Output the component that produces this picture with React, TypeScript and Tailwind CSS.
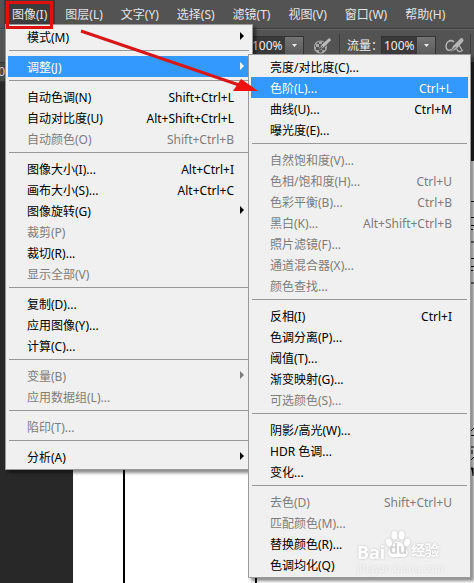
import clsx from "clsx";

type Item = {
  label: string;
  keys?: string;
  disabled?: boolean;
  active?: boolean;
  sub?: boolean;
};

const MENU_BAR = [
  "图像(I)",
  "图层(L)",
  "文字(Y)",
  "选择(S)",
  "滤镜(T)",
  "视图(V)",
  "窗口(W)",
  "帮助(H)",
];

const IMAGE_MENU: Item[][] = [
  [{ label: "模式(M)", sub: true }],
  [{ label: "调整(J)", sub: true, active: true }],
  [
    { label: "自动色调(N)", keys: "Shift+Ctrl+L" },
    { label: "自动对比度(U)", keys: "Alt+Shift+Ctrl+L" },
    { label: "自动颜色(O)", keys: "Shift+Ctrl+B", disabled: true },
  ],
  [
    { label: "图像大小(I)...", keys: "Alt+Ctrl+I" },
    { label: "画布大小(S)...", keys: "Alt+Ctrl+C" },
    { label: "图像旋转(G)", sub: true },
    { label: "裁剪(P)", disabled: true },
    { label: "裁切(R)..." },
    { label: "显示全部(V)", disabled: true },
  ],
  [
    { label: "复制(D)..." },
    { label: "应用图像(Y)..." },
    { label: "计算(C)..." },
  ],
  [
    { label: "变量(B)", sub: true, disabled: true },
    { label: "应用数据组(L)...", disabled: true },
  ],
  [{ label: "陷印(T)...", disabled: true }],
  [{ label: "分析(A)", sub: true }],
];

const ADJUST_MENU: Item[][] = [
  [
    { label: "亮度/对比度(C)..." },
    { label: "色阶(L)...", keys: "Ctrl+L", active: true },
    { label: "曲线(U)...", keys: "Ctrl+M" },
    { label: "曝光度(E)..." },
  ],
  [
    { label: "自然饱和度(V)...", disabled: true },
    { label: "色相/饱和度(H)...", keys: "Ctrl+U", disabled: true },
    { label: "色彩平衡(B)...", keys: "Ctrl+B", disabled: true },
    { label: "黑白(K)...", keys: "Alt+Shift+Ctrl+B", disabled: true },
    { label: "照片滤镜(F)...", disabled: true },
    { label: "通道混合器(X)...", disabled: true },
    { label: "颜色查找...", disabled: true },
  ],
  [
    { label: "反相(I)", keys: "Ctrl+I" },
    { label: "色调分离(P)..." },
    { label: "阈值(T)..." },
    { label: "渐变映射(G)..." },
    { label: "可选颜色(S)...", disabled: true },
  ],
  [
    { label: "阴影/高光(W)..." },
    { label: "HDR 色调..." },
    { label: "变化..." },
  ],
  [
    { label: "去色(D)", keys: "Shift+Ctrl+U", disabled: true },
    { label: "匹配颜色(M)...", disabled: true },
    { label: "替换颜色(R)..." },
    { label: "色调均化(Q)" },
  ],
];

function MenuRow({ item }: { item: Item }) {
  return (
    <button
      type="button"
      role="menuitem"
      disabled={item.disabled}
      className={clsx(
        "relative flex h-[21px] w-full items-center justify-between pl-[19px] pr-4 pt-0.5 text-left whitespace-nowrap",
        item.active && "bg-[#3399ff] text-white",
        item.disabled && "text-[#7d7d7d]"
      )}
    >
      <span>{item.label}</span>
      {item.keys && <span>{item.keys}</span>}
      {item.sub && (
        <svg className="absolute right-1.5 top-1.5 h-2 w-1" viewBox="0 0 4 8" fill="currentColor">
          <path d="M0 0L4 4L0 8Z" />
        </svg>
      )}
    </button>
  );
}

function Menu({ groups, className }: { groups: Item[][]; className: string }) {
  return (
    <div
      role="menu"
      className={clsx(
        "absolute border border-[#9a9a9a] bg-[#f0f0f0] px-0.5 pt-px pb-0.5 text-black shadow-[3px_3px_3px_rgba(0,0,0,0.45)]",
        className
      )}
    >
      {groups.map((group, i) => (
        <div key={i}>
          {i > 0 && <div className="mx-px mt-[3px] mb-[5px] h-px bg-[#979797]" />}
          {group.map((item) => (
            <MenuRow key={item.label} item={item} />
          ))}
        </div>
      ))}
    </div>
  );
}

function PercentBox({ id, label }: { id: string; label: string }) {
  return (
    <div className="flex h-[19px] border border-[#333] bg-[#3a3a3a]">
      <input
        id={id}
        aria-label={label}
        defaultValue="100%"
        className="w-[35px] bg-transparent pl-0.5 text-[#eee] outline-none"
      />
      <button
        type="button"
        aria-label={label + " ▾"}
        className="flex w-[18px] items-center justify-center bg-linear-to-b from-[#747474] to-[#5b5b5b]"
      >
        <svg className="h-[3px] w-[5px]" viewBox="0 0 5 3" fill="#eee">
          <path d="M0 0H5L2.5 3Z" />
        </svg>
      </button>
    </div>
  );
}

// opacity pressure: checkered disc with a pen across it
function PressureIcon() {
  return (
    <svg width="19" height="18" viewBox="0 0 19 18" fill="none">
      <circle cx="7.5" cy="10" r="6" stroke="#a5a5a5" strokeWidth="1.2" />
      <path
        d="M3 7h3v3H3zM9 7h2v3H9zM6 4.5h3V7H6zM6 10h3v3H6zM3 13h3v2H3zM9 13h3v2H9zM1.5 10H3v3H1.5zM12 10h1v3h-1z"
        fill="#a5a5a5"
      />
      <path d="M18 1.5L16 .8L8 8L6.500 12.500L11 10.500L18 3.500Z" fill="#bdbdbd" stroke="#505050" strokeWidth=".8" />
      <path d="M6.500 12.500L10 9" stroke="#505050" strokeWidth=".8" />
    </svg>
  );
}

// airbrush: hose looping around a pen
function AirbrushIcon() {
  return (
    <svg width="19" height="18" viewBox="0 0 19 18" fill="none" strokeLinecap="round">
      <path d="M8.500 4.500C4.500 2 1 5.500 1 9C1 12.500 3.500 14.500 6 12.500" stroke="#b5b5b5" strokeWidth="1.500" />
      <path d="M18 1.500L16 1L8 9L5.500 15L11.500 12L18.500 4Z" fill="#b5b5b5" />
      <path d="M6 14.500L10.500 10" stroke="#505050" />
      <path d="M12 12.500C13 15 15.500 15 17.500 13.500M14.500 9L17 13" stroke="#b5b5b5" strokeWidth="1.300" />
    </svg>
  );
}

function Watermark() {
  return (
    <div className="pointer-events-none absolute left-[357px] top-[522px] text-white [filter:drop-shadow(0_0_1px_#bdbdbd)]">
      <div className="flex h-10 items-end font-bold leading-5">
        <span className="text-lg leading-5">Bai</span>
        <span className="relative">
          <svg width="26" height="29" viewBox="0 0 28 32" fill="currentColor" className="mb-1">
            <ellipse cx="4" cy="15" rx="3.200" ry="4.500" transform="rotate(-15 4 15)" />
            <ellipse cx="10" cy="7" rx="3.300" ry="4.800" />
            <ellipse cx="18" cy="7" rx="3.300" ry="4.800" />
            <ellipse cx="24" cy="15" rx="3.200" ry="4.500" transform="rotate(15 24 15)" />
            <path d="M14 14C9 14 8 19 5 22C1 26 4 31 9 31H19C24 31 27 26 23 22C20 19 19 14 14 14Z" />
          </svg>
          <span className="absolute left-1 top-2.5 text-sm leading-5 text-[#d4d4d4]">du</span>
        </span>
        <span className="mb-0.5 text-sm leading-5">经验</span>
      </div>
      <div className="text-[10px] leading-3 opacity-50">jingyan.baidu.com</div>
    </div>
  );
}

export default function App() {
  return (
    <main className="relative flex min-h-screen flex-col overflow-hidden bg-[#282828] font-['Noto_Sans','Noto_Sans_CJK_SC',sans-serif] text-xs leading-5">
      <nav className="flex h-7 items-start gap-0.5 bg-[#535353] pl-1 text-[#e4e4e4]">
        {MENU_BAR.map((name, i) => (
          <button
            key={name}
            type="button"
            className={clsx("h-7 px-2 pt-px whitespace-nowrap", i === 0 && "bg-[#3c3c3c]")}
          >
            {name}
          </button>
        ))}
      </nav>

      {/* brush options */}
      <div className="flex h-[34px] items-center border-t border-[#3a3a3a] bg-[#535353] pl-[249px] text-[#eee] shadow-[inset_0_1px_0_#666]">
        <PercentBox id="opacity" label="不透明度" />
        <span className="ml-[9px]">
          <PressureIcon />
        </span>
        <span className="ml-[7px] h-6 w-px bg-[#3d3d3d]" />
        <label htmlFor="flow" className="ml-[7px] w-[34px] whitespace-nowrap">
          流量：
        </label>
        <PercentBox id="flow" label="流量" />
        <span className="ml-[9px]">
          <AirbrushIcon />
        </span>
        <span className="ml-[6px] h-6 w-px bg-[#3d3d3d]" />
      </div>

      {/* document window */}
      <div className="flex h-5 w-[5px] justify-end overflow-hidden border-y border-[#333] bg-[#484848] leading-[18px] text-[#ccc]">
        <span>0</span>
      </div>
      <div className="mt-[79px] flex grow pl-[73px]">
        <div className="flex grow justify-between bg-white">
          <div className="ml-[50px] w-[134px] border-x-2 border-black" />
          <svg width="3" height="320" viewBox="0 161 3 320" stroke="#000">
            <path d="M0 201.500H3M0 217.500H3M0 225.500H3M0 242H3M0 258.500H3M0 266.500H3M0 283H3M0 435.500H3" />
            <path d="M0 229.500H2M0 270.500H2M0 431L3 428M0 447H3M1 450V454M0 460L3 457M0 468H2V476" />
          </svg>
        </div>
      </div>

      <Menu groups={IMAGE_MENU} className="left-[5px] top-6 w-[248px]" />
      <Menu groups={ADJUST_MENU} className="left-[248px] top-[54px] w-[223px]" />

      <Watermark />

      {/* red callout over the menus */}
      <svg className="pointer-events-none absolute left-0 top-0" width="270" height="100" fill="none">
        <rect x="7.500" y="2.500" width="44" height="25" stroke="#e01010" strokeWidth="3" />
        <path d="M81 31L242 86" stroke="#d81818" strokeWidth="3" />
        <path d="M258 91L233 91L241 79Z" fill="#f01010" />
      </svg>
    </main>
  );
}
